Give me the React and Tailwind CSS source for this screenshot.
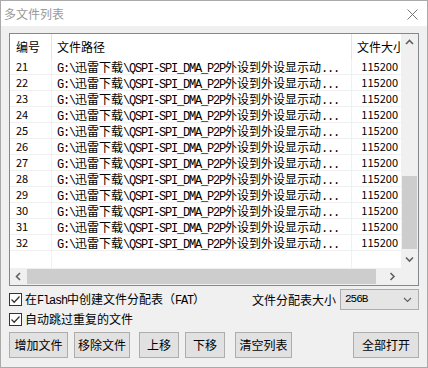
import React from "react";

const CJK = "font-['Noto_Sans_CJK_SC','Noto_Sans',sans-serif]";
const MONO = "font-['Liberation_Mono','Noto_Sans_CJK_SC',monospace] tracking-[-1.2px]";

function A({ children }) {
  return <span className={MONO}>{children}</span>;
}

function Path() {
  return (
    <span className="whitespace-nowrap">
      <A>G:\</A>迅雷下载<A>\QSPI-SPI_DMA_P2P</A>外设到外设显示动<A>...</A>
    </span>
  );
}

function Chevron({ dir }) {
  const d = {
    up: "M1 5 L4.5 1.5 L8 5",
    down: "M1 1.5 L4.5 5 L8 1.5",
    left: "M5 1 L1.5 4.5 L5 8",
    right: "M1.5 1 L5 4.5 L1.5 8",
  }[dir];
  const vert = dir === "up" || dir === "down";
  return (
    <svg width={vert ? 9 : 7} height={vert ? 7 : 9} viewBox={vert ? "0 0 9 7" : "0 0 7 9"}>
      <path d={d} fill="none" stroke="#606060" strokeWidth="1.6" />
    </svg>
  );
}

function Check() {
  return (
    <svg width="13" height="13" viewBox="0 0 13 13" className="shrink-0">
      <rect x="0.5" y="0.5" width="12" height="12" fill="#fff" stroke="#333" />
      <path d="M2.5 6.5 L5.2 9.2 L10.5 3.5" fill="none" stroke="#333" strokeWidth="1.3" />
    </svg>
  );
}

const rows = [21, 22, 23, 24, 25, 26, 27, 28, 29, 30, 31, 32];

export default function App() {
  return (
    <div className={`w-[428px] h-[368px] border border-[#aaaaaa] bg-[#f0f0f0] flex flex-col text-[12px] text-black ${CJK}`}>
      <div className="h-[25px] bg-white flex items-center justify-between pl-[3px] pr-[9px] pt-px shrink-0">
        <span className="text-[#999999] leading-none">多文件列表</span>
        <svg width="11" height="11" viewBox="0 0 11 11">
          <path d="M0.5 0.5 L10.5 10.5 M10.5 0.5 L0.5 10.5" stroke="#777" strokeWidth="1" />
        </svg>
      </div>
      <div className="flex-1 flex flex-col px-[8px] pt-[7px]">
        {/* list view */}
        <div className="h-[253px] border border-[#828790] bg-white flex flex-col shrink-0">
          <div className="flex-1 flex min-h-0">
            <div className="flex-1 flex overflow-hidden">
              {/* col 1 */}
              <div className="w-[42px] shrink-0 flex flex-col border-r border-[#f0f0f0]">
                <div className="h-[25px] flex items-center pl-[6px] border-r border-[#e5e5e5] -mr-px">编号</div>
                {rows.map((r) => (
                  <div key={r} className="h-[16px] border-b border-[#f0f0f0] pl-[6px] leading-[15px] text-[11px]">
                    {r}
                  </div>
                ))}
              </div>
              {/* col 2 */}
              <div className="w-[300px] shrink-0 flex flex-col border-r border-[#f0f0f0]">
                <div className="h-[25px] flex items-center pl-[5px] border-r border-[#e5e5e5] -mr-px">文件路径</div>
                {rows.map((r) => (
                  <div key={r} className="h-[16px] border-b border-[#f0f0f0] pl-[5px] leading-[15px] overflow-hidden">
                    <Path />
                  </div>
                ))}
              </div>
              {/* col 3 */}
              <div className="w-[56px] shrink-0 flex flex-col">
                <div className="h-[25px] flex items-center pl-[5px] whitespace-nowrap">文件大小</div>
                {rows.map((r) => (
                  <div key={r} className="h-[16px] border-b border-[#f0f0f0] pr-[10px] text-right leading-[15px] text-[11px]">
                    115200
                  </div>
                ))}
              </div>
            </div>
            {/* vertical scrollbar */}
            <div className="w-[17px] shrink-0 bg-[#f0f0f0] flex flex-col">
              <div className="h-[17px] flex items-center justify-center">
                <Chevron dir="up" />
              </div>
              <div className="flex-1 flex flex-col justify-end px-px pb-[2px]">
                <div className="h-[73px] bg-[#cdcdcd]" />
              </div>
              <div className="h-[17px] flex items-center justify-center">
                <Chevron dir="down" />
              </div>
            </div>
          </div>
          {/* horizontal scrollbar */}
          <div className="h-[17px] shrink-0 flex">
            <div className="flex-1 bg-[#f0f0f0] flex items-center">
              <div className="w-[17px] h-full flex items-center justify-center">
                <Chevron dir="left" />
              </div>
              <div className="flex-1 h-full py-px pr-[8px]">
                <div className="h-full bg-[#cdcdcd]" />
              </div>
              <div className="w-[17px] h-full flex items-center justify-center">
                <Chevron dir="right" />
              </div>
            </div>
            <div className="w-[17px] bg-[#f0f0f0]" />
          </div>
        </div>

        {/* options row 1 */}
        <div className="mt-[3px] h-[21px] flex items-center">
          <Check />
          <span className="ml-[3px] whitespace-nowrap">
            在<A>Flash</A>中创建文件分配表（<A>FAT</A>）
          </span>
          <span className="ml-auto mr-[4px]">文件分配表大小</span>
          <div className="w-[79px] h-[21px] border border-[#acacac] bg-[#e5e5e5] flex items-center pl-[4px] pr-[6px]">
            <span className="font-['Liberation_Mono',monospace] text-[11px] tracking-[-1px]">256B</span>
            <svg width="9" height="6" viewBox="0 0 9 6" className="ml-auto">
              <path d="M1 1 L4.5 4.5 L8 1" fill="none" stroke="#606060" strokeWidth="1.2" />
            </svg>
          </div>
        </div>
        {/* options row 2 */}
        <div className="h-[18px] flex items-center">
          <Check />
          <span className="ml-[3px]">自动跳过重复的文件</span>
        </div>

        {/* buttons */}
        <div className="mt-[4px] flex">
          <button className="w-[59px] h-[26px] bg-[#e1e1e1] border border-[#adadad]">增加文件</button>
          <button className="ml-[6px] w-[56px] h-[26px] bg-[#e1e1e1] border border-[#adadad]">移除文件</button>
          <button className="ml-[9px] w-[40px] h-[26px] bg-[#e1e1e1] border border-[#adadad]">上移</button>
          <button className="ml-[6px] w-[40px] h-[26px] bg-[#e1e1e1] border border-[#adadad]">下移</button>
          <button className="ml-[10px] w-[57px] h-[26px] bg-[#e1e1e1] border border-[#adadad]">清空列表</button>
          <button className="ml-auto w-[66px] h-[26px] bg-[#e1e1e1] border border-[#adadad]">全部打开</button>
        </div>
      </div>
    </div>
  );
}
